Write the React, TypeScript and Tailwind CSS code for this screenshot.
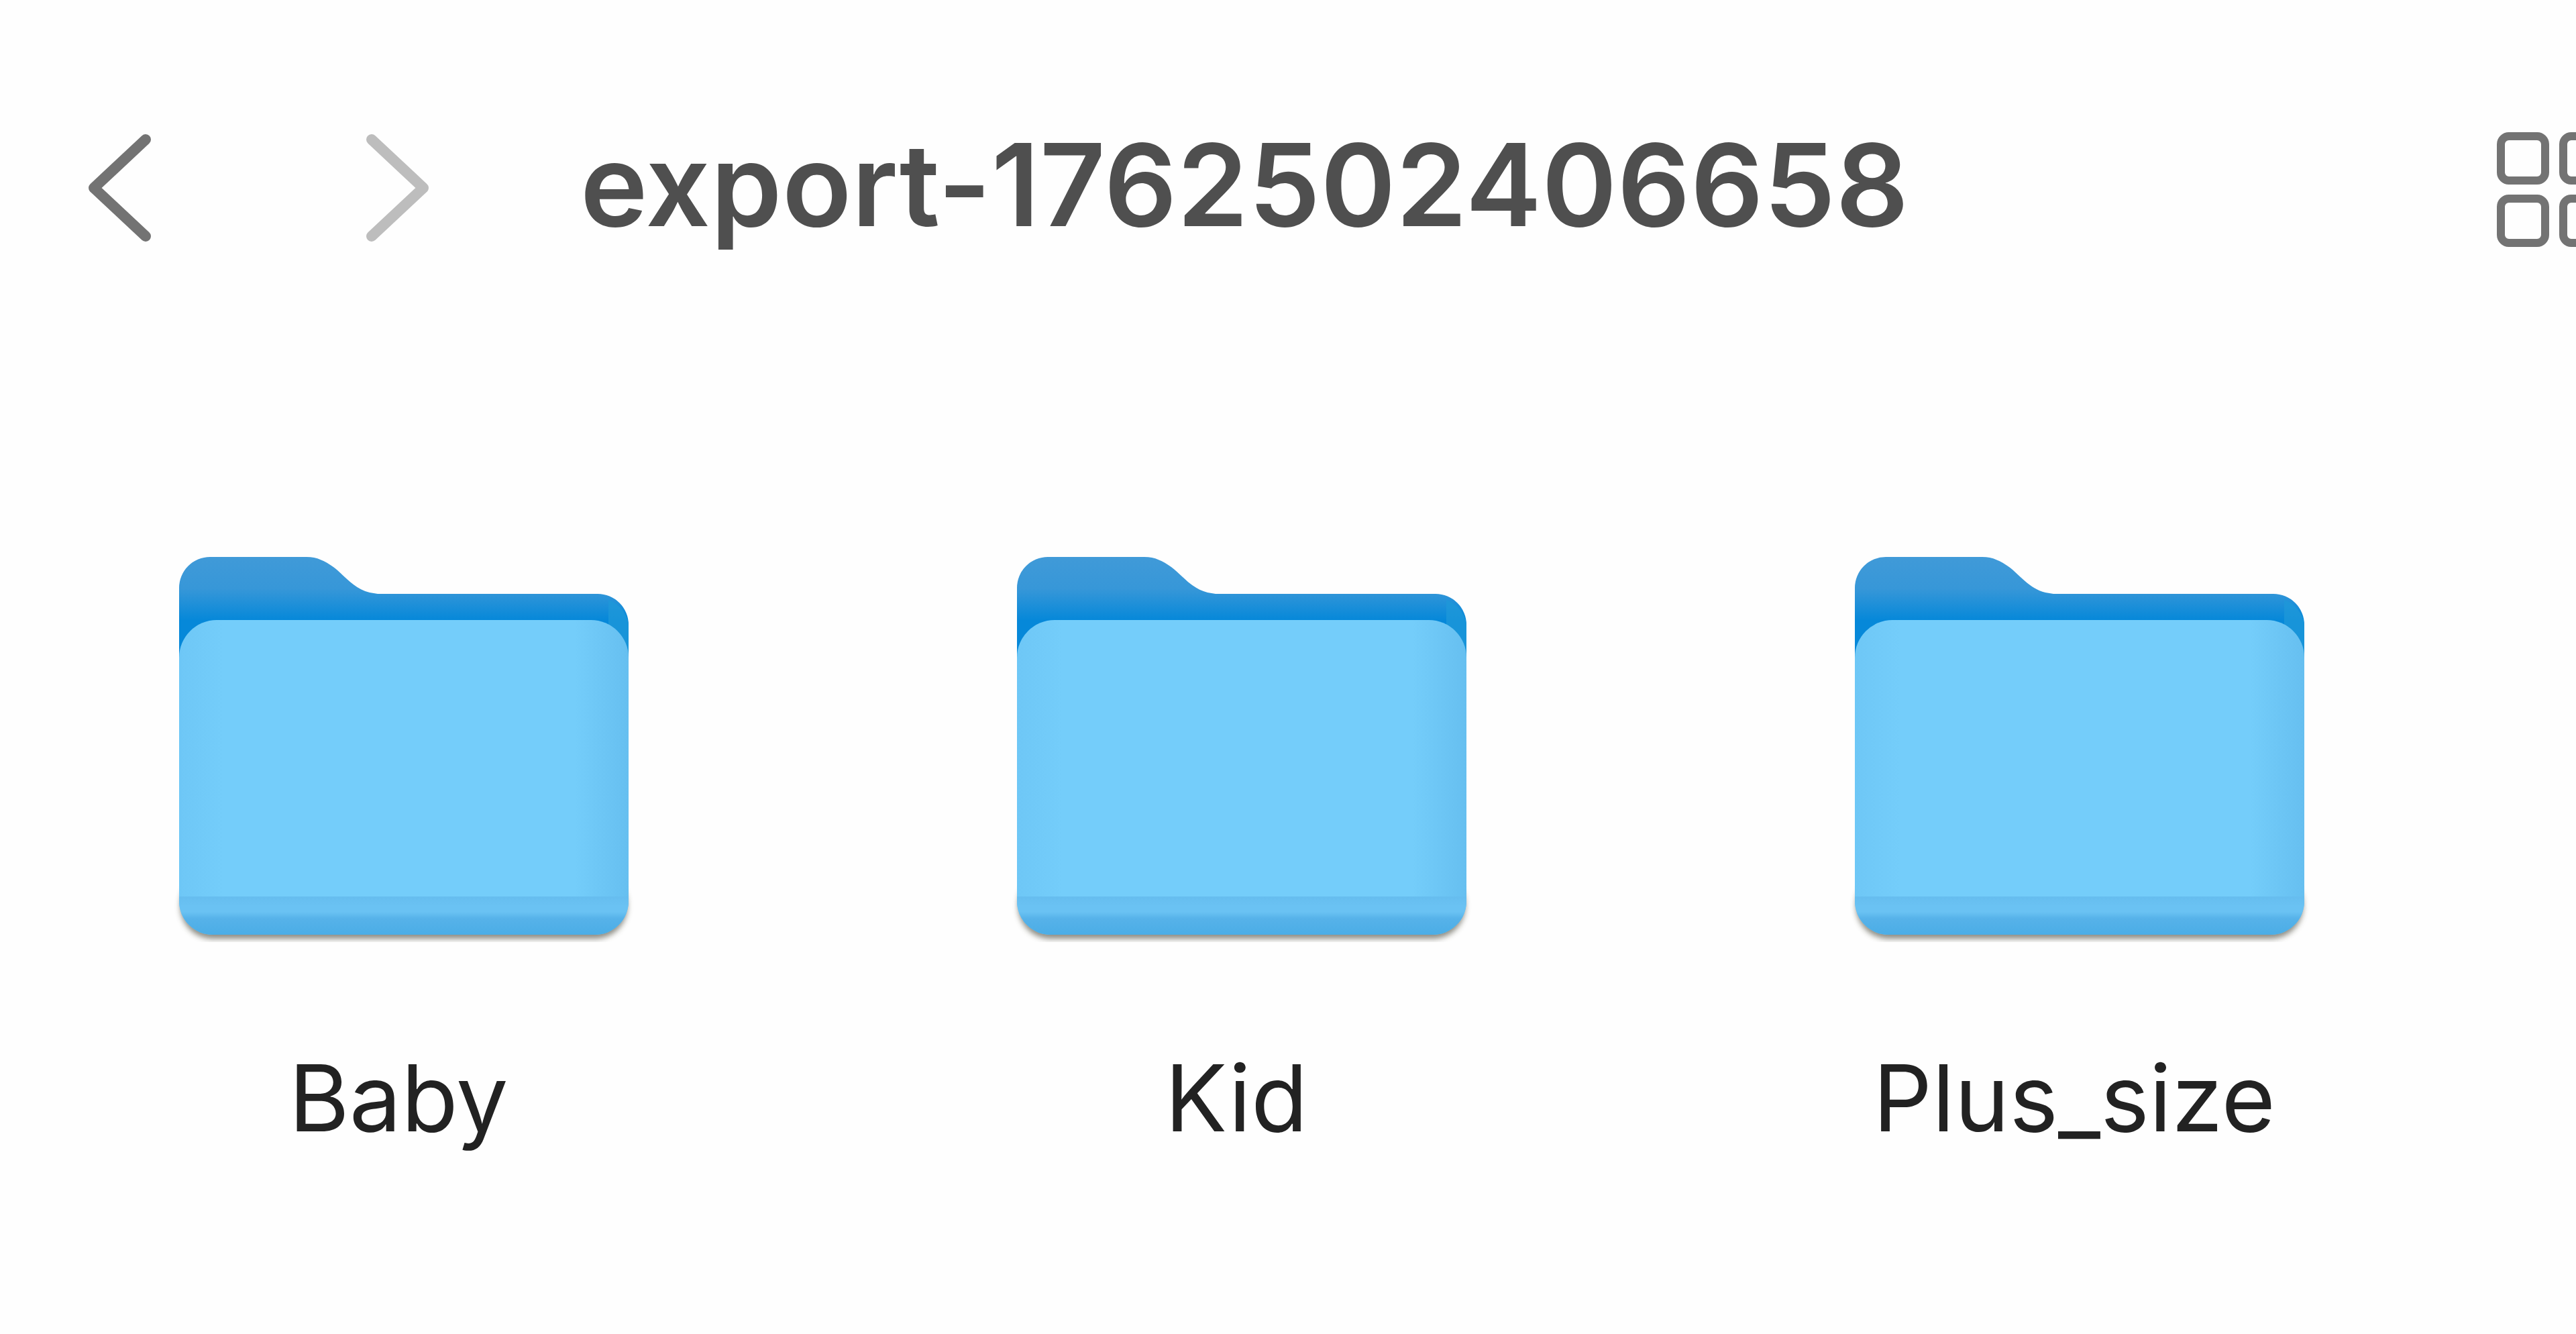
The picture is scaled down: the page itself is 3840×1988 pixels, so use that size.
import React from 'react';

const folders = ['Baby', 'Kid', 'Plus_size'];

const FolderIcon: React.FC<{ id: string }> = ({ id }) => (
  <svg viewBox="-20 -10 710 600" className="block w-[710px] h-[600px] -mx-[20px] -my-[10px] shrink-0">
    <defs>
      <linearGradient id={`${id}-back`} gradientUnits="userSpaceOnUse" x1="0" y1="0" x2="0" y2="94">
        <stop offset="0" stopColor="#409ad8" />
        <stop offset="0.5" stopColor="#3797d8" />
        <stop offset="1" stopColor="#0688d9" />
      </linearGradient>
      <linearGradient id={`${id}-front`} x1="0" y1="0" x2="1" y2="0">
        <stop offset="0" stopColor="#6ec7f6" />
        <stop offset="0.1" stopColor="#74cdfa" />
        <stop offset="0.88" stopColor="#74cdfa" />
        <stop offset="1" stopColor="#66bff0" />
      </linearGradient>
      <linearGradient id={`${id}-band`} x1="0" y1="0" x2="0" y2="1">
        <stop offset="0" stopColor="#66bdef" />
        <stop offset="0.25" stopColor="#6ac2f3" />
        <stop offset="0.4" stopColor="#6ac2f3" />
        <stop offset="0.58" stopColor="#56b2e9" />
        <stop offset="1" stopColor="#4badE6" />
      </linearGradient>
      <filter id={`${id}-shadow`} x="-5%" y="-5%" width="110%" height="110%">
        <feGaussianBlur stdDeviation="4" />
      </filter>
    </defs>
    <rect x="2" y="470" width="666" height="99" rx="48" fill="#5c5c50" opacity="0.7" filter={`url(#${id}-shadow)`} />
    <path
      d="M0 150 V46 A46 46 0 0 1 46 0 H190 C206 0 217 6 230 15 C246 27 260 47 284 53 L296 55 H624 A46 46 0 0 1 670 101 V150 Z"
      fill={`url(#${id}-back)`}
    />
    <path d="M640 64 A46 46 0 0 1 670 101 V150 H640 Z" fill="#1f98d8" opacity="0.75" />
    <path
      d="M0 150 A56 56 0 0 1 56 94 H614 A56 56 0 0 1 670 150 V513 A50 50 0 0 1 620 563 H50 A50 50 0 0 1 0 513 Z"
      fill={`url(#${id}-front)`}
    />
    <path
      d="M0 506 H670 V513 A50 50 0 0 1 620 563 H50 A50 50 0 0 1 0 513 Z"
      fill={`url(#${id}-band)`}
    />
  </svg>
);

export default function App() {
  return (
    <div className="w-full h-[1988px] overflow-hidden bg-[#fefefe] font-['Inter','Liberation_Sans',sans-serif]">
      <div className="flex items-center pt-[191px] pl-[127px]">
        <svg viewBox="0 0 100 164" fill="none" stroke="#737373" strokeWidth="16" strokeLinecap="round" strokeLinejoin="round" className="w-[100px] h-[164px] shrink-0">
          <path d="M90 10 L13 82 L90 154" />
        </svg>
        <svg viewBox="0 0 100 164" fill="none" stroke="#bdbdbd" strokeWidth="16" strokeLinecap="round" strokeLinejoin="round" className="ml-[315px] w-[100px] h-[164px] shrink-0">
          <path d="M12 10 L89 82 L12 154" />
        </svg>
        <h1 className="ml-[223px] mb-[10px] text-[170px] leading-[164px] font-semibold tracking-[0.4px] text-[#4f4f4f] whitespace-nowrap">export-1762502406658</h1>
        <svg viewBox="0 0 180 172" fill="none" stroke="#737373" strokeWidth="12" className="self-start mt-[6px] ml-auto -mr-[62px] w-[180px] h-[172px] shrink-0">
          <rect x="6" y="6" width="66" height="66" rx="12" />
          <rect x="99" y="6" width="66" height="66" rx="12" />
          <rect x="6" y="99" width="66" height="66" rx="12" />
          <rect x="99" y="99" width="66" height="66" rx="12" />
        </svg>
      </div>
      <div className="flex gap-[579px] pl-[267px] pt-[461px]">
        {folders.map((name) => (
          <div key={name} className="flex flex-col items-center w-[670px]">
            <FolderIcon id={name} />
            <span className="mt-[146px] mr-[16px] text-[138px] leading-[160px] text-[#222222] whitespace-nowrap">{name}</span>
          </div>
        ))}
      </div>
    </div>
  );
}
